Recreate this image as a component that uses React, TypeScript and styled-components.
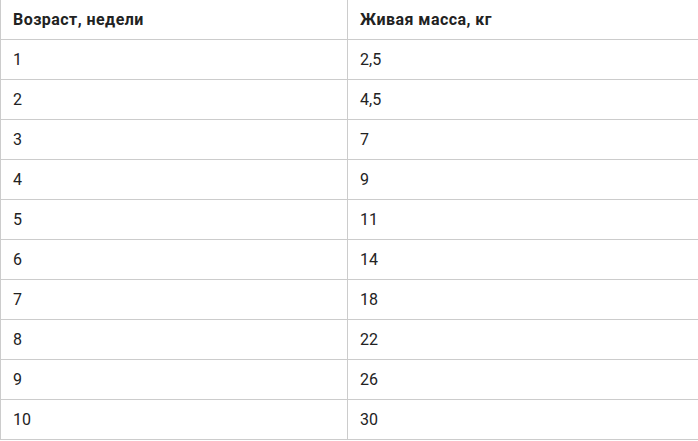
import React from 'react';
import styled, { createGlobalStyle } from 'styled-components';

const GlobalStyle = createGlobalStyle`
  html, body {
    margin: 0;
    padding: 0;
    background: #fff;
  }
  body {
    font-family: Roboto, "Liberation Sans", Arial, sans-serif;
    overflow: hidden;
  }
`;

const rows: [string, string][] = [
  ['1', '2,5'],
  ['2', '4,5'],
  ['3', '7'],
  ['4', '9'],
  ['5', '11'],
  ['6', '14'],
  ['7', '18'],
  ['8', '22'],
  ['9', '26'],
  ['10', '30'],
];

const Table = styled.table`
  width: 699px;
  border-collapse: collapse;
  table-layout: fixed;
  margin-top: -1px;
  color: #222;
  font-size: 16px;
`;

const Cell = styled.td<{ $head?: boolean }>`
  height: 39px;
  padding: 0 12px;
  border: 1px solid #cccccc;
  font-weight: ${(p) => (p.$head ? 700 : 400)};
  letter-spacing: ${(p) => (p.$head ? '0.45px' : 'normal')};
  vertical-align: middle;
  line-height: 18px;
`;

const App = () => {
  return (
    <>
      <GlobalStyle />
      <Table>
        <colgroup>
          <col style={{ width: 347 }} />
          <col />
        </colgroup>
        <tbody>
          <tr>
            <Cell $head>Возраст, недели</Cell>
            <Cell $head>Живая масса, кг</Cell>
          </tr>
          {rows.map(([age, mass]) => (
            <tr key={age}>
              <Cell>{age}</Cell>
              <Cell>{mass}</Cell>
            </tr>
          ))}
        </tbody>
      </Table>
    </>
  );
};

export default App;
